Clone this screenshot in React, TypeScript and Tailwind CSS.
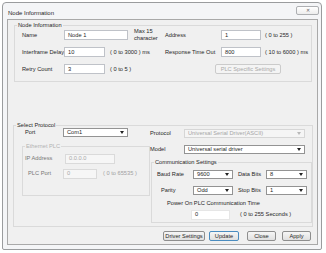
import type { ReactNode } from 'react';
import clsx from 'clsx';

function TextBox({ value, className, disabled }: { value: string; className: string; disabled?: boolean }) {
  return (
    <div
      className={clsx(
        'flex h-[10px] shrink-0 items-center border pl-[3px]',
        disabled ? 'border-[#dadada] bg-[#f6f6f6] text-[#a8a8a8]' : 'border-[#bfc2c8] bg-white',
        className
      )}
    >
      {value}
    </div>
  );
}

function Combo({ value, className, disabled }: { value: string; className: string; disabled?: boolean }) {
  return (
    <div
      className={clsx(
        'flex h-[9px] shrink-0 items-center justify-between border pl-[3px] pr-[3px]',
        disabled ? 'border-[#d6d6d6] bg-[#f5f5f5] text-[#a6a6a6]' : 'border-[#939393] bg-white',
        className
      )}
    >
      <span>{value}</span>
      <svg width="4" height="3" viewBox="0 0 4 3">
        <path d="M0 0h4L2 3z" fill={disabled ? '#b8b8b8' : '#222'} />
      </svg>
    </div>
  );
}

function Button({ children, className, primary, disabled }: { children: ReactNode; className: string; primary?: boolean; disabled?: boolean }) {
  return (
    <div
      className={clsx(
        'flex h-[10px] shrink-0 items-center justify-center rounded-[2px] border',
        disabled
          ? 'border-[#cbcbcb] bg-[#f4f4f4] text-[#a9a9a9]'
          : 'bg-linear-to-b from-[#f6f6f6] to-[#e0e0e0]',
        !disabled && (primary ? 'border-[#4a8cc0]' : 'border-[#8e8e8e]'),
        className
      )}
    >
      {children}
    </div>
  );
}

function Group({ title, className, muted, children }: { title: string; className: string; muted?: boolean; children: ReactNode }) {
  return (
    <fieldset className={clsx('min-w-0 border border-[#dadada]', className)}>
      <legend className={clsx('ml-[2px] px-[1px] leading-[6px]', muted && 'text-[#b2b2b2]')}>{title}</legend>
      {children}
    </fieldset>
  );
}

export default function App() {
  return (
    <div className="h-[253px] w-[326px] whitespace-nowrap bg-white pl-[2px] pt-[2px] font-['Liberation_Sans',Arial,sans-serif] text-[5.7px] leading-[7px] text-[#262626]">
      <div className="h-[248px] w-[320px] rounded-t-[4px] rounded-b-[2px] border border-[#9a9c9e] bg-[#f4f5f7]">
        {/* title bar */}
        <div className="flex h-[16px] items-start justify-between">
          <span className="ml-[5px] mt-[7px] text-[6px]">Node Information</span>
          <div className="mr-[2px] mt-[3px] flex h-[9px] w-[23px] items-center justify-center rounded-[2px] border border-[#adafb2] bg-linear-to-b from-white to-[#ededed] text-[5px] text-[#666]">
            ✕
          </div>
        </div>

        {/* client area */}
        <div className="ml-[4px] h-[226px] w-[311px] border border-[#a9a9a9] bg-[#f0f0f0]">
          <Group title="Node Information" className="ml-[6px] mt-[2px] h-[60px] w-[298px]">
            <div className="mt-[2px] flex flex-col gap-[7px] pl-[7px]">
              <div className="flex h-[10px] items-center">
                <span className="w-[42px] shrink-0">Name</span>
                <TextBox value="Node 1" className="w-[64px]" />
                <span className="ml-[6px] w-[31px] shrink-0 leading-[7px]">
                  Max 15
                  <br />
                  character
                </span>
                <span className="w-[56px] shrink-0">Address</span>
                <TextBox value="1" className="w-[40px]" />
                <span className="ml-[4px]">( 0 to 255 )</span>
              </div>
              <div className="flex h-[10px] items-center">
                <span className="w-[42px] shrink-0">Interframe Delay</span>
                <TextBox value="10" className="w-[41px]" />
                <span className="ml-[5px] w-[55px] shrink-0">( 0 to 3000 ) ms</span>
                <span className="w-[56px] shrink-0">Response Time Out</span>
                <TextBox value="800" className="w-[40px]" />
                <span className="ml-[4px]">( 10 to 6000 ) ms</span>
              </div>
              <div className="flex h-[10px] items-center">
                <span className="w-[42px] shrink-0">Retry Count</span>
                <TextBox value="3" className="w-[41px]" />
                <span className="ml-[5px] w-[50px] shrink-0">( 0 to 5 )</span>
                <Button disabled className="ml-[55px] w-[66px]">
                  PLC Specific Settings
                </Button>
              </div>
            </div>
          </Group>

          <Group title="Select Protocol" className="ml-[5px] mt-[40px] h-[105px] w-[300px]">
            <div className="flex">
              {/* left column */}
              <div className="w-[136px] shrink-0">
                <div className="flex h-[9px] items-center">
                  <span className="w-[49px] shrink-0 pl-[11px]">Port</span>
                  <Combo value="Com1" className="w-[65px]" />
                </div>
                <Group title="Ethernet PLC" muted className="ml-[8px] mt-[6px] h-[53px] w-[128px]">
                  <div className="mt-[5px] flex h-[9px] items-center text-[#777]">
                    <span className="w-[42px] shrink-0 pl-[2px]">IP Address</span>
                    <TextBox value="0.0.0.0" disabled className="h-[9px] w-[50px]" />
                  </div>
                  <div className="mt-[6px] flex h-[9px] items-center text-[#777]">
                    <span className="w-[40px] shrink-0 pl-[5px]">PLC Port</span>
                    <TextBox value="0" disabled className="h-[9px] w-[34px]" />
                    <span className="ml-[6px] text-[#a0a0a0]">( 0 to 65535 )</span>
                  </div>
                </Group>
              </div>

              {/* right column */}
              <div className="flex-1">
                <div className="mt-[1px] flex h-[9px] items-center">
                  <span className="w-[34px] shrink-0">Protocol</span>
                  <Combo value="Universal Serial Driver(ASCII)" disabled className="w-[121px]" />
                </div>
                <div className="mt-[7px] flex h-[9px] items-center">
                  <span className="w-[34px] shrink-0">Model</span>
                  <Combo value="Universal serial driver" className="w-[121px]" />
                </div>
                <Group title="Communication Settings" className="ml-[1px] mt-[5px] h-[64px] w-[161px]">
                  <div className="mt-[5px] flex h-[9px] items-center">
                    <span className="w-[41px] shrink-0 pl-[5px]">Baud Rate</span>
                    <Combo value="9600" className="w-[40px]" />
                    <span className="ml-[5px] w-[28px] shrink-0">Data Bits</span>
                    <Combo value="8" className="w-[41px]" />
                  </div>
                  <div className="mt-[7px] flex h-[9px] items-center">
                    <span className="w-[41px] shrink-0 pl-[9px]">Parity</span>
                    <Combo value="Odd" className="w-[40px]" />
                    <span className="ml-[5px] w-[28px] shrink-0">Stop Bits</span>
                    <Combo value="1" className="w-[41px]" />
                  </div>
                  <div className="mt-[5px] pl-[15px]">Power On PLC Communication Time</div>
                  <div className="mt-[3px] flex h-[9px] items-center">
                    <TextBox value="0" className="ml-[39px] h-[9px] w-[39px] border-[#e6e6e6]" />
                    <span className="ml-[10px]">( 0 to 255 Seconds )</span>
                  </div>
                </Group>
              </div>
            </div>
          </Group>

          <div className="mt-[4px] flex justify-end pr-[6px]">
            <Button className="w-[42px]">Driver Settings</Button>
            <Button primary className="ml-[4px] w-[30px]">
              Update
            </Button>
            <Button className="ml-[8px] w-[29px]">Close</Button>
            <Button className="ml-[6px] w-[29px]">Apply</Button>
          </div>
        </div>
      </div>
    </div>
  );
}
